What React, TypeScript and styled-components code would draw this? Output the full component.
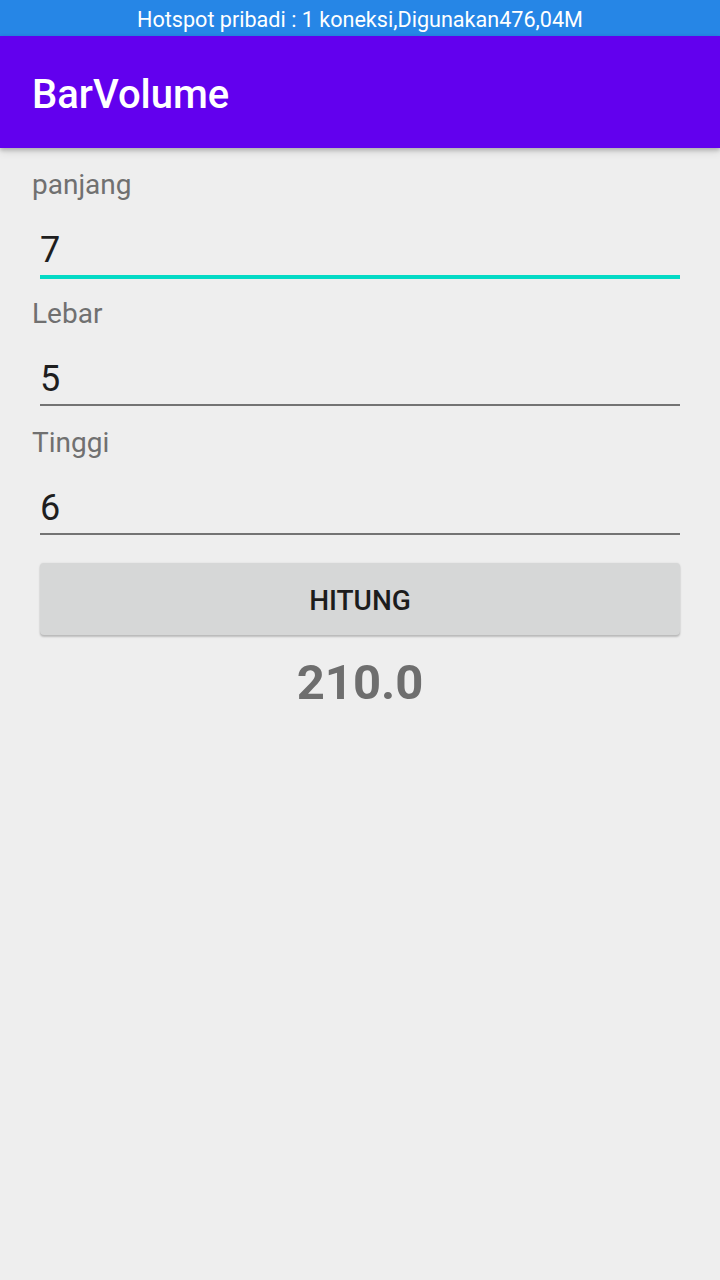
import React from "react";
import styled, { createGlobalStyle } from "styled-components";

const Global = createGlobalStyle`
  html, body { margin: 0; padding: 0; background: #eeeeee; }
  body { font-family: Roboto, "Noto Sans", sans-serif; }
  * { box-sizing: border-box; }
`;

const Screen = styled.div`
  width: 720px;
  min-height: 1280px;
  background: #eeeeee;
  display: flex;
  flex-direction: column;
`;

const StatusBar = styled.div`
  height: 36px;
  background: #2686e6;
  color: #ffffff;
  font-size: 21.6px;
  display: flex;
  align-items: center;
  justify-content: center;
  padding-top: 3px;
`;

const AppBar = styled.header`
  height: 112px;
  background: #6200ee;
  color: #ffffff;
  display: flex;
  align-items: center;
  padding: 5px 32px 0;
  font-size: 40px;
  font-weight: 500;
  box-shadow: 0 2px 4px rgba(0, 0, 0, 0.22), 0 4px 8px rgba(0, 0, 0, 0.1);
  position: relative;
  z-index: 1;
`;

const Form = styled.main`
  display: flex;
  flex-direction: column;
  padding: 20px 40px 0;
`;

const Group = styled.div`
  display: flex;
  flex-direction: column;
  height: 129px;
`;

const Label = styled.label`
  font-size: 28px;
  line-height: 33px;
  color: #707070;
  margin-left: -8px;
`;

const Input = styled.input`
  margin-top: 26px;
  height: 42px;
  padding: 4px 0 0;
  border: none;
  outline: none;
  background: transparent;
  font-family: Roboto, sans-serif;
  font-size: 36px;
  color: #1e1e1e;
  width: 100%;
`;

const Line = styled.div<{ $focused?: boolean }>`
  margin-top: 6px;
  height: ${(p) => (p.$focused ? 4 : 2)}px;
  background: ${(p) => (p.$focused ? "#03dac5" : "#737373")};
`;

const Button = styled.button`
  margin-top: 8px;
  height: 72px;
  padding-top: 3px;
  border: none;
  border-radius: 4px;
  background: #d6d7d7;
  color: #1c1c1c;
  font-family: Roboto, sans-serif;
  font-size: 28px;
  font-weight: 500;
  box-shadow: 0 2px 2px rgba(0, 0, 0, 0.2), 0 0 2px rgba(0, 0, 0, 0.1);
`;

const Result = styled.div`
  margin-top: 19px;
  text-align: center;
  font-size: 49px;
  font-weight: 700;
  color: #6e6e6e;
`;

const fields = [
  { label: "panjang", value: "7", focused: true },
  { label: "Lebar", value: "5" },
  { label: "Tinggi", value: "6" },
];

export default function App() {
  return (
    <Screen>
      <Global />
      <StatusBar>Hotspot pribadi : 1 koneksi,Digunakan476,04M</StatusBar>
      <AppBar>BarVolume</AppBar>
      <Form>
        {fields.map((f) => (
          <Group key={f.label}>
            <Label>{f.label}</Label>
            <Input defaultValue={f.value} />
            <Line $focused={f.focused} />
          </Group>
        ))}
        <Button>HITUNG</Button>
        <Result>210.0</Result>
      </Form>
    </Screen>
  );
}
